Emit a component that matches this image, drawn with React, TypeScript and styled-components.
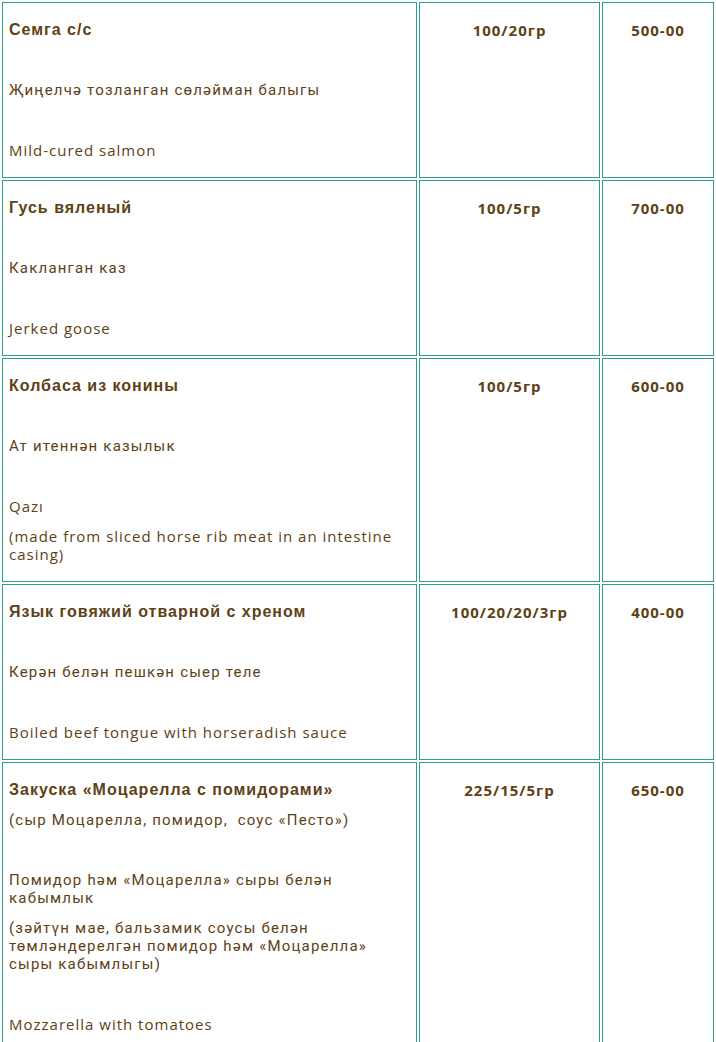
import React from 'react'
import styled, { createGlobalStyle } from 'styled-components'

type LineKind = 'title' | 'tat' | 'eng' | 'gap'

interface ILine {
  kind: LineKind
  text?: string
}

interface IDish {
  lines: ILine[]
  weight: string
  price: string
}

const dishes: IDish[] = [
  {
    lines: [
      { kind: 'title', text: 'Семга с/с' },
      { kind: 'gap' },
      { kind: 'tat', text: 'Җиңелчә тозланган сөләйман балыгы' },
      { kind: 'gap' },
      { kind: 'eng', text: 'Mild-cured salmon' }
    ],
    weight: '100/20гр',
    price: '500-00'
  },
  {
    lines: [
      { kind: 'title', text: 'Гусь вяленый' },
      { kind: 'gap' },
      { kind: 'tat', text: 'Какланган каз' },
      { kind: 'gap' },
      { kind: 'eng', text: 'Jerked goose' }
    ],
    weight: '100/5гр',
    price: '700-00'
  },
  {
    lines: [
      { kind: 'title', text: 'Колбаса из конины' },
      { kind: 'gap' },
      { kind: 'tat', text: 'Ат итеннән казылык' },
      { kind: 'gap' },
      { kind: 'eng', text: 'Qazı' },
      { kind: 'eng', text: '(made from sliced horse rib meat in an intestine casing)' }
    ],
    weight: '100/5гр',
    price: '600-00'
  },
  {
    lines: [
      { kind: 'title', text: 'Язык говяжий отварной с хреном' },
      { kind: 'gap' },
      { kind: 'tat', text: 'Керән белән пешкән сыер теле' },
      { kind: 'gap' },
      { kind: 'eng', text: 'Boiled beef tongue with horseradish sauce' }
    ],
    weight: '100/20/20/3гр',
    price: '400-00'
  },
  {
    lines: [
      { kind: 'title', text: 'Закуска «Моцарелла с помидорами»' },
      { kind: 'tat', text: '(сыр Моцарелла, помидор,\u00a0 соус «Песто»)' },
      { kind: 'gap' },
      { kind: 'tat', text: 'Помидор һәм «Моцарелла» сыры белән кабымлык' },
      { kind: 'tat', text: '(зәйтүн мае, бальзамик соусы белән төмләндерелгән помидор һәм «Моцарелла» сыры кабымлыгы)' },
      { kind: 'gap' },
      { kind: 'eng', text: 'Mozzarella with tomatoes' }
    ],
    weight: '225/15/5гр',
    price: '650-00'
  }
]

const App: React.FC = () => {
  return (
    <>
      <GlobalStyle />
      <StyledMenu>
        <tbody>
          {dishes.map((dish, i) => (
            <tr key={i}>
              <StyledCell $width={415}>
                {dish.lines.map((line, j) => (
                  <StyledLine key={j} $kind={line.kind}>
                    {line.text || '\u00a0'}
                  </StyledLine>
                ))}
              </StyledCell>
              <StyledCell $width={181} $center>
                <StyledLine $kind='eng' $bold>{dish.weight}</StyledLine>
              </StyledCell>
              <StyledCell $width={112} $center>
                <StyledLine $kind='eng' $bold>{dish.price}</StyledLine>
              </StyledCell>
            </tr>
          ))}
        </tbody>
      </StyledMenu>
    </>
  )
}

export default App

const GlobalStyle = createGlobalStyle`
  body {
    margin: 0;
    background: #fff;
    font-family: Roboto, sans-serif;
  }
`

const StyledMenu = styled.table`
  width: 716px;
  border-collapse: separate;
  border-spacing: 2px;
  table-layout: fixed;
`

const StyledCell = styled.td<{ $width: number; $center?: boolean }>`
  width: ${(p) => p.$width - 14}px;
  padding: 6px;
  border: 1px solid #2e9d8c;
  vertical-align: top;
  text-align: ${(p) => (p.$center ? 'center' : 'left')};
`

const fonts: Record<LineKind, string> = {
  title: `font-family: "Liberation Sans", Arial, sans-serif; font-weight: 700; font-size: 16px; letter-spacing: 1px;`,
  tat: `font-family: Roboto, sans-serif; font-weight: 400; font-size: 15px; letter-spacing: 1.2px;`,
  eng: `font-family: "Open Sans", sans-serif; font-weight: 400; font-size: 15px; letter-spacing: 1px;`,
  gap: `font-family: Roboto, sans-serif; font-size: 15px;`
}

const StyledLine = styled.p<{ $kind: LineKind; $bold?: boolean }>`
  margin: 12px 0;
  line-height: 18px;
  color: #5e4115;
  ${(p) => fonts[p.$kind]}
  ${(p) => (p.$bold ? 'font-weight: 700; letter-spacing: 1px;' : '')}
`
